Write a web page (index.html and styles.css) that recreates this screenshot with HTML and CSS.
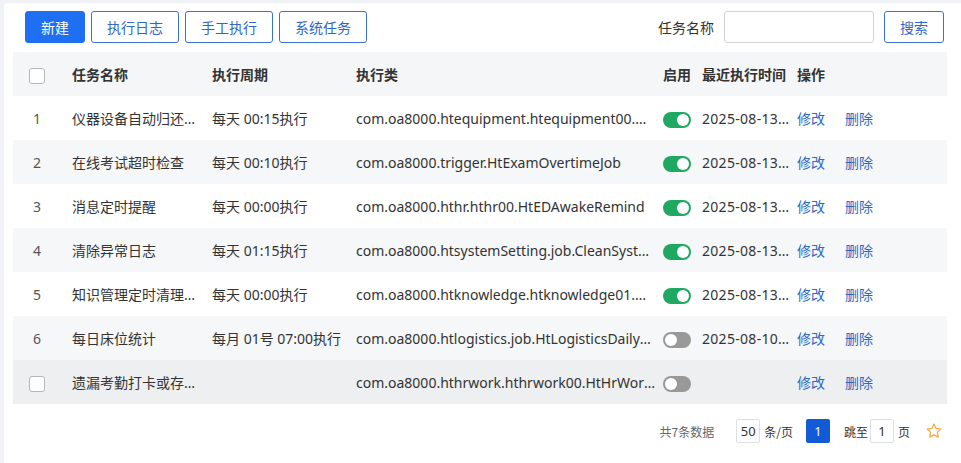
FILE: index.html
```html
<!DOCTYPE html>
<html lang="zh-CN">
<head>
<meta charset="utf-8">
<title>定时任务</title>
<link rel="stylesheet" href="styles.css">
</head>
<body>
<div class="page">
  <div class="toolbar">
    <div class="btns">
      <button class="btn btn-primary">新建</button>
      <button class="btn">执行日志</button>
      <button class="btn">手工执行</button>
      <button class="btn">系统任务</button>
    </div>
    <div class="search">
      <span class="search-label">任务名称</span>
      <input class="search-input" type="text">
      <button class="btn btn-search">搜索</button>
    </div>
  </div>

  <table class="grid">
    <colgroup>
      <col class="c0"><col class="c1"><col class="c2"><col class="c3"><col class="c4"><col class="c5"><col class="c6">
    </colgroup>
    <thead>
      <tr>
        <th class="idx"><span class="chk"></span></th>
        <th>任务名称</th>
        <th>执行周期</th>
        <th>执行类</th>
        <th class="swc">启用</th>
        <th class="tight">最近执行时间</th>
        <th class="ops">操作</th>
      </tr>
    </thead>
    <tbody>
      <tr>
        <td class="idx">1</td>
        <td>仪器设备自动归还任务</td>
        <td>每天 00:15执行</td>
        <td>com.oa8000.htequipment.htequipment00.HtEquipmentAutoReturn</td>
        <td class="swc"><span class="sw on"></span></td>
        <td class="tight date">2025-08-13 00:15:00</td>
        <td class="ops"><a class="lk">修改</a><a class="lk">删除</a></td>
      </tr>
      <tr class="stripe">
        <td class="idx">2</td>
        <td>在线考试超时检查</td>
        <td>每天 00:10执行</td>
        <td>com.oa8000.trigger.HtExamOvertimeJob</td>
        <td class="swc"><span class="sw on"></span></td>
        <td class="tight date">2025-08-13 00:10:00</td>
        <td class="ops"><a class="lk">修改</a><a class="lk">删除</a></td>
      </tr>
      <tr>
        <td class="idx">3</td>
        <td>消息定时提醒</td>
        <td>每天 00:00执行</td>
        <td>com.oa8000.hthr.hthr00.HtEDAwakeRemind</td>
        <td class="swc"><span class="sw on"></span></td>
        <td class="tight date">2025-08-13 00:00:00</td>
        <td class="ops"><a class="lk">修改</a><a class="lk">删除</a></td>
      </tr>
      <tr class="stripe">
        <td class="idx">4</td>
        <td>清除异常日志</td>
        <td>每天 01:15执行</td>
        <td>com.oa8000.htsystemSetting.job.CleanSystemLogJob</td>
        <td class="swc"><span class="sw on"></span></td>
        <td class="tight date">2025-08-13 01:15:00</td>
        <td class="ops"><a class="lk">修改</a><a class="lk">删除</a></td>
      </tr>
      <tr>
        <td class="idx">5</td>
        <td>知识管理定时清理任务</td>
        <td>每天 00:00执行</td>
        <td>com.oa8000.htknowledge.htknowledge01.HtKnowledgeClean</td>
        <td class="swc"><span class="sw on"></span></td>
        <td class="tight date">2025-08-13 00:00:00</td>
        <td class="ops"><a class="lk">修改</a><a class="lk">删除</a></td>
      </tr>
      <tr class="stripe">
        <td class="idx">6</td>
        <td>每日床位统计</td>
        <td>每月 01号 07:00执行</td>
        <td>com.oa8000.htlogistics.job.HtLogisticsDailyBedJob</td>
        <td class="swc"><span class="sw"></span></td>
        <td class="tight date">2025-08-10 07:00:00</td>
        <td class="ops"><a class="lk">修改</a><a class="lk">删除</a></td>
      </tr>
      <tr class="hover">
        <td class="idx"><span class="chk"></span></td>
        <td>遗漏考勤打卡或存在异常提醒</td>
        <td></td>
        <td>com.oa8000.hthrwork.hthrwork00.HtHrWorkRemindJob</td>
        <td class="swc"><span class="sw"></span></td>
        <td class="tight date"></td>
        <td class="ops"><a class="lk">修改</a><a class="lk">删除</a></td>
      </tr>
    </tbody>
  </table>

  <div class="pager">
    <span class="total">共7条数据</span>
    <span class="box">50</span>
    <span class="unit">条/页</span>
    <span class="pg">1</span>
    <span class="unit">跳至</span>
    <span class="box jump">1</span>
    <span class="unit">页</span>
    <svg class="star" width="18" height="18" viewBox="0 0 24 24"><path d="M12 2.8l2.8 5.8 6.3.9-4.6 4.4 1.1 6.3L12 17.2l-5.6 3 1.1-6.3-4.6-4.4 6.3-.9z" fill="none" stroke="#f5a93a" stroke-width="1.6" stroke-linejoin="round"/></svg>
  </div>
</div>
</body>
</html>
```

FILE: styles.css
```css
* { box-sizing: border-box; }
html, body { margin: 0; padding: 0; }
body {
  background: #f0f2f5;
  font-family: "Noto Sans", "Noto Sans CJK SC", sans-serif;
  font-size: 14px;
  color: #333;
}
.page {
  margin: 3px 0 0 4px;
  background: #fff;
  border-top-left-radius: 4px;
  height: 460px;
  padding: 8px 14px 0 9px;
}
.toolbar {
  display: flex;
  justify-content: space-between;
  align-items: center;
  padding: 0 0 0 12px;
  height: 32px;
}
.btns { display: flex; gap: 6px; }
.btn {
  height: 32px;
  padding: 0 15px;
  border: 1px solid #3b71d6;
  border-radius: 3px;
  background: #fff;
  color: #2f66c9;
  font-family: "Noto Sans CJK SC", sans-serif;
  font-size: 14px;
  line-height: 30px;
}
.btn-primary { background: #1f6ff2; border-color: #1f6ff2; color: #fff; }
.search { display: flex; align-items: center; margin-right: 3px; }
.search-label { font-family: "Noto Sans CJK SC", sans-serif; color: #333; margin-right: 10px; }
.search-input {
  width: 150px; height: 32px;
  border: 1px solid #cfd3d8; border-radius: 3px;
  margin-right: 10px;
}
.btn-search { padding: 0; width: 60px; }

.grid {
  margin-top: 9px;
  width: 934px;
  border-collapse: collapse;
  table-layout: fixed;
}
.c0 { width: 51px; }
.c1 { width: 140px; }
.c2 { width: 144px; }
.c3 { width: 308px; }
.c4 { width: 38px; }
.c5 { width: 97px; }
.c6 { width: 156px; }
.grid th, .grid td {
  height: 44px;
  padding: 0 0 0 8px;
  text-align: left;
  white-space: nowrap;
  overflow: hidden;
  text-overflow: ellipsis;
  vertical-align: middle;
}
.grid thead tr { background: #f5f6f8; }
.grid th { font-weight: 600; color: #333; }
.grid td { color: #333; }
.grid .idx { text-align: center; padding: 0 3px 0 0; color: #555; }
.grid .swc { padding-left: 7px; overflow: visible; }
.grid .tight { padding-right: 0; }
.grid td.date { letter-spacing: 0.3px; }
.grid .ops { padding-left: 6px; overflow: visible; }
.stripe { background: #f6f7f9; }
.hover { background: #eeeff1; }
.chk {
  display: inline-block;
  width: 16px; height: 16px;
  border: 1px solid #b3b7bd;
  border-radius: 3px;
  background: #fff;
  vertical-align: middle;
}
.sw {
  display: inline-block;
  position: relative;
  width: 28px; height: 16px;
  border-radius: 8px;
  background: #999;
  vertical-align: middle;
}
.sw::after {
  content: "";
  position: absolute;
  top: 2px; left: 2px;
  width: 12px; height: 12px;
  border-radius: 50%;
  background: #fff;
}
.sw.on { background: #1fa862; }
.sw.on::after { left: 14px; }
.lk { color: #2c69c6; margin-right: 20px; cursor: pointer; }

.pager {
  display: flex;
  justify-content: flex-end;
  align-items: center;
  height: 24px;
  margin-top: 15px;
  padding-right: 4px;
  font-size: 12px;
  color: #333;
  font-family: "Noto Sans CJK SC", sans-serif;
}
.total { color: #666; margin-right: 22px; }
.box {
  width: 24px; height: 24px;
  border: 1px solid #dcdfe3;
  border-radius: 2px;
  display: flex; align-items: center; justify-content: center;
  font-family: "Noto Sans", sans-serif;
  font-size: 13px;
}
.unit { margin: 0 4px; }
.pg {
  width: 24px; height: 24px;
  background: #135bd6;
  border-radius: 2px;
  color: #fff;
  display: flex; align-items: center; justify-content: center;
  margin: 0 10px 0 9px;
  font-family: "Noto Sans", sans-serif;
}
.jump { margin: 0 0 0 -2px; }
.star { margin-left: 11px; }
```
